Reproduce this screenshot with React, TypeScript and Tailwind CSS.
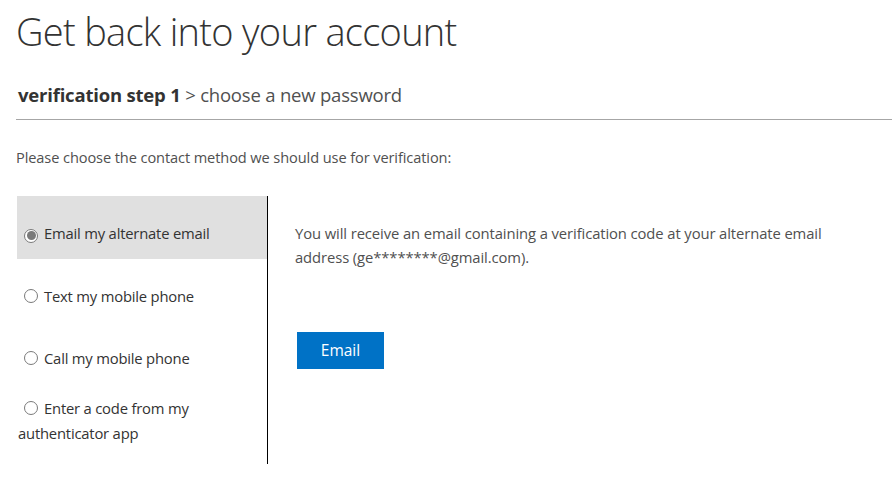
import React from "react";

const options = [
  { id: "email", label: "Email my alternate email" },
  { id: "text", label: "Text my mobile phone" },
  { id: "call", label: "Call my mobile phone" },
];

function Radio({ checked }: { checked?: boolean }) {
  return (
    <span className="mr-[6px] inline-flex h-[14px] w-[14px] shrink-0 items-center justify-center rounded-full border border-[#7a7a7a] bg-white align-[-1px]">
      {checked && <span className="h-[9px] w-[9px] rounded-full bg-[#7a7a7a]" />}
    </span>
  );
}

export default function App() {
  const selected = "email";

  return (
    <div
      className="min-h-[484px] w-[892px] overflow-hidden bg-white pl-4 text-[#505050]"
      style={{ fontFamily: '"Open Sans", "Noto Sans", "Liberation Sans", sans-serif' }}
    >
      <h1 className="pt-[5px] text-[38px] font-light leading-[52px] tracking-[-0.7px] text-[#333]">
        Get back into your account
      </h1>

      {/* Breadcrumb */}
      <div className="mt-[26px] pl-[2px] text-[18.5px] leading-[24px] tracking-[-0.2px]">
        <span className="font-bold text-[#333]">verification step 1</span>
        <span className="text-[#505050]"> &gt; choose a new password</span>
      </div>

      <div className="mt-[12px] h-px bg-[#a6a6a6]" />

      <p className="mt-[27px] text-[14.6px] leading-[20px] tracking-[-0.1px]">
        Please choose the contact method we should use for verification:
      </p>

      <div className="mt-[29px] flex">
        {/* Method list */}
        <div className="ml-px h-[268px] w-[251px] border-r border-black text-[14.8px] tracking-[-0.2px] text-[#333]">
          {options.map((o) => (
            <div
              key={o.id}
              className={
                o.id === selected
                  ? "h-[63px] bg-[#e0e0e0] pl-[7px] pt-[27px] leading-[20px]"
                  : "h-[62px] pl-[7px] pt-[27px] leading-[20px]"
              }
            >
              <Radio checked={o.id === selected} />
              {o.label}
            </div>
          ))}
          <div className="pl-px pt-[13px] leading-[25px]">
            <span className="pl-[6px]">
              <Radio />
            </span>
            Enter a code from my
            <br />
            authenticator app
          </div>
        </div>

        {/* Detail */}
        <div className="pl-[27px] pt-[25px]">
          <p className="w-[545px] text-[14.8px] leading-[24px] tracking-[-0.1px]">
            You will receive an email containing a verification code at your alternate email address
            (ge********@gmail.com).
          </p>
          <button className="ml-[2px] mt-[63px] h-[37px] w-[87px] bg-[#0072c6] text-[15.5px] text-white">
            Email
          </button>
        </div>
      </div>
    </div>
  );
}
